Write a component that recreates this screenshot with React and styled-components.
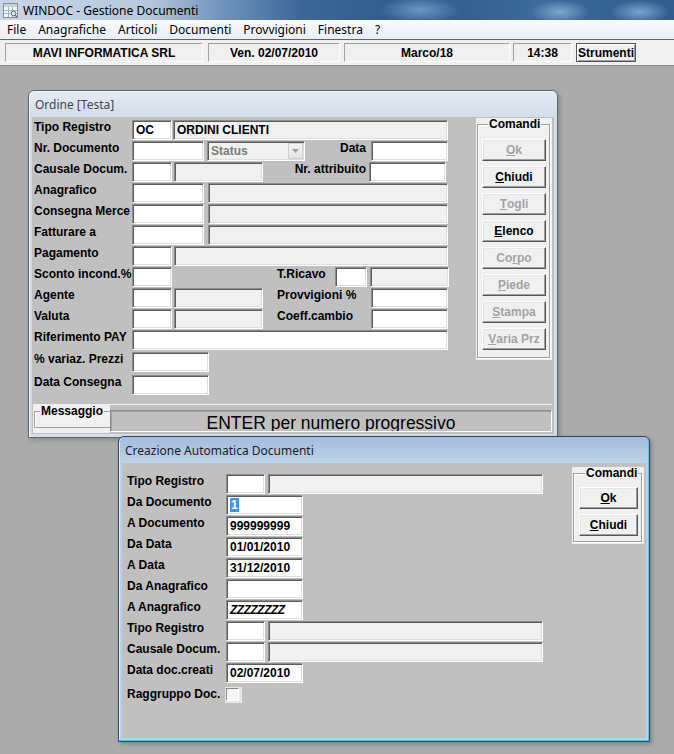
import React from 'react';
import styled, { createGlobalStyle } from 'styled-components';

const GlobalStyle = createGlobalStyle`
  html, body { margin: 0; padding: 0; background: #ababab; }
  body { overflow: hidden; }
`;

// ---- shell ----
const Screen = styled.div`
  width: 674px;
  height: 754px;
  display: flex;
  flex-direction: column;
  overflow: hidden;
  font-family: "Liberation Sans", Arial, sans-serif;
`;

const AppTitle = styled.div`
  height: 20px;
  display: flex;
  align-items: center;
  gap: 5px;
  padding-left: 3px;
  background:
    radial-gradient(ellipse 40px 14px at 420px 10px, rgba(160, 200, 240, 0.55), transparent),
    radial-gradient(ellipse 30px 12px at 560px 12px, rgba(170, 210, 245, 0.6), transparent),
    radial-gradient(ellipse 30px 12px at 640px 12px, rgba(170, 210, 245, 0.6), transparent),
    linear-gradient(90deg, #c9d6e6 0%, #b7c8dc 22%, #6f93bd 33%, #3b6697 45%, #2f5b8c 62%, #3c6a9c 80%, #2f5c8d 100%);
  font-family: "Noto Sans", "Liberation Sans", sans-serif;
  font-size: 12px;
  color: #000;
`;

const MenuBar = styled.div`
  height: 19px;
  display: flex;
  align-items: center;
  padding-left: 1px;
  background: linear-gradient(#f8fafd, #e9eef6);
  border-bottom: 1px solid #5e6670;
  font-family: "Noto Sans", "Liberation Sans", sans-serif;
  font-size: 12px;
`;

const MenuItem = styled.span`
  padding: 0 6px;
  color: #000;
`;

const StatusBar = styled.div`
  height: 26px;
  box-sizing: border-box;
  display: flex;
  align-items: center;
  padding-left: 5px;
  background: #f0f0f0;
  border-bottom: 1px solid #8a8a8a;
`;

const Panel = styled.div`
  width: ${p => p.$w}px;
  margin-left: ${p => p.$ml || 0}px;
  height: 19px;
  box-sizing: border-box;
  border: 1px solid;
  border-color: #a0a0a0 #fff #fff #a0a0a0;
  display: flex;
  align-items: center;
  justify-content: center;
  font-weight: bold;
  font-size: 12px;
`;

const ToolButton = styled.div`
  width: 60px;
  height: 19px;
  margin-left: 4px;
  box-sizing: border-box;
  border: 1px solid #555;
  box-shadow: inset 1px 1px 0 #fff, inset -1px -1px 0 #a0a0a0;
  display: flex;
  align-items: center;
  justify-content: center;
  font-weight: bold;
  font-size: 12px;
  background: #f0f0f0;
`;

const Desktop = styled.div`
  flex: 1;
  position: relative;
  background: #ababab;
`;

// ---- MDI child windows ----
const MdiWindow = styled.div`
  position: absolute;
  left: ${p => p.$x}px;
  top: ${p => p.$y}px;
  width: ${p => p.$w}px;
  height: ${p => p.$h}px;
  box-sizing: border-box;
  display: flex;
  flex-direction: column;
  padding: 0 3px 3px;
  border: 1px solid ${p => (p.$active ? '#34475e' : '#5f6770')};
  border-radius: 6px 6px 0 0;
  background: ${p =>
    p.$active
      ? 'linear-gradient(#a3bcdb 0, #bcd3eb 26px, #b9d1ea 26px)'
      : 'linear-gradient(#e5ecf5 0, #d2dde9 26px, #d4dfeb 26px)'};
  box-shadow: ${p =>
    p.$active
      ? 'inset -1px -1px 0 #62c1e6, inset 1px 0 0 #e6f0fa, 2px 2px 4px rgba(0,0,0,0.25)'
      : 'inset 1px 1px 0 #f2f6fa, 2px 2px 4px rgba(0,0,0,0.2)'};
`;

const WinTitle = styled.div`
  height: 26px;
  flex: none;
  display: flex;
  align-items: center;
  padding-left: 3px;
  font-family: "Noto Sans", "Liberation Sans", sans-serif;
  font-size: 12px;
  color: ${p => (p.$active ? '#1d1d1d' : '#474747')};
`;

const Client = styled.div`
  flex: 1;
  display: flex;
  flex-direction: column;
  background: #c0c0c0;
  padding: ${p => p.$pt}px 0 0 ${p => p.$pl}px;
  overflow: hidden;
`;

const TopArea = styled.div`
  display: flex;
  align-items: flex-start;
`;

const Form = styled.div`
  width: ${p => p.$w}px;
  margin-top: ${p => p.$mt}px;
  display: flex;
  flex-direction: column;
  gap: 1px;
`;

const Row = styled.div`
  display: flex;
  align-items: flex-start;
  height: ${p => p.$h || 20}px;
  margin-top: ${p => p.$mt || 0}px;
`;

const Label = styled.div`
  flex: none;
  width: ${p => p.$w || 98}px;
  margin-left: ${p => p.$ml || 0}px;
  box-sizing: border-box;
  padding-top: 1px;
  padding-right: ${p => (p.$right ? 3 : 0)}px;
  text-align: ${p => (p.$right ? 'right' : 'left')};
  font-weight: bold;
  font-size: 12px;
  line-height: 12px;
  white-space: nowrap;
  color: #000;
`;

const Field = styled.div`
  flex: none;
  width: ${p => p.$w}px;
  margin-left: ${p => p.$ml || 0}px;
  height: 20px;
  box-sizing: border-box;
  background: ${p => (p.$gray ? '#f0f0f0' : '#fff')};
  border: 1px solid;
  border-color: #8c8c8c #fff #fff #8c8c8c;
  box-shadow: inset 1px 1px 0 #5c5c5c, inset -1px -1px 0 #dedede;
  padding-left: 3px;
  font-weight: bold;
  font-size: 12px;
  line-height: 18px;
  white-space: nowrap;
  overflow: hidden;
  color: #000;
`;

const Combo = styled(Field)`
  display: flex;
  justify-content: space-between;
  align-items: center;
  padding-right: 1px;
  background: #f0f0f0;
  color: #7b7b7b;
`;

const ComboArrow = styled.span`
  width: 15px;
  height: 16px;
  box-sizing: border-box;
  display: flex;
  align-items: center;
  justify-content: center;
  background: linear-gradient(#f4f4f4, #e4e4e4);
  border: 1px solid #d0d0d0;
`;

const Selected = styled.span`
  background: #3399ff;
  color: #fff;
  padding: 0 1px;
`;

const Slanted = styled.span`
  font-style: italic;
  letter-spacing: -0.5px;
`;

const CheckWrap = styled.div`
  width: 17px;
  height: 16px;
  margin-left: -1px;
  background: #e6e6e6;
  padding: 1px;
  box-sizing: border-box;
`;

const CheckBox = styled.div`
  width: 13px;
  height: 13px;
  box-sizing: border-box;
  border: 1px solid;
  border-color: #8c8c8c #fff #fff #8c8c8c;
  background: #f4f4f4;
`;

// ---- group boxes & buttons ----
const GroupWrap = styled.div`
  flex: none;
  width: ${p => p.$w}px;
  margin-left: ${p => p.$ml}px;
  background: #f0f0f0;
`;

const Fieldset = styled.fieldset`
  margin: 0 2px 2px 1px;
  padding: ${p => p.$pt}px 0 ${p => p.$pb}px ${p => p.$pl}px;
  border: 1px solid #a0a0a0;
  box-shadow: inset 1px 1px 0 #fff, 1px 1px 0 #fff;
  min-width: 0;
`;

const Legend = styled.legend`
  margin-left: 6px;
  padding: 0 1px;
  background: #f0f0f0;
  font-weight: bold;
  font-size: 12px;
  line-height: 13px;
  color: #000;
`;

const CmdButton = styled.div`
  width: ${p => p.$w}px;
  height: 22px;
  box-sizing: border-box;
  display: flex;
  align-items: center;
  justify-content: center;
  background: #f0f0f0;
  border: 1px solid;
  border-color: #fff #555 #555 #fff;
  box-shadow: inset -1px -1px 0 #a0a0a0, inset 1px 1px 0 #e6e6e6;
  font-weight: bold;
  font-size: 12px;
  color: ${p => (p.$off ? '#a3a3a3' : '#000')};
  & + & { margin-top: 5px; }
  u { text-decoration: underline; }
`;

// ---- message bar ----
const MessageRow = styled.div`
  display: flex;
  height: 28px;
  margin: auto 2px 1px -1px;
  border-top: 1px solid #efefef;
`;

const MessageTag = styled.div`
  width: 77px;
  flex: none;
  background: #f0f0f0;
`;

const MessageFieldset = styled.fieldset`
  margin: 0 0 0 1px;
  padding: 0;
  height: 23px;
  box-sizing: border-box;
  border: 1px solid #a0a0a0;
  border-right: none;
  box-shadow: inset 1px 1px 0 #fff;
`;

const MessageLegend = styled(Legend)`
  margin-left: 5px;
`;

const MessageField = styled.div`
  flex: 1;
  margin-top: 5px;
  height: 22px;
  box-sizing: border-box;
  border: 1px solid;
  border-color: #8c8c8c #fff #fff #8c8c8c;
  box-shadow: inset 1px 1px 0 #a0a0a0;
  background: #c0c0c0;
  overflow: hidden;
  text-align: center;
  font-size: 17.5px;
  line-height: 24px;
  white-space: nowrap;
  color: #000;
`;

const AppIcon = () => (
  <svg width="15" height="15" viewBox="0 0 15 15">
    <rect x="0.5" y="0.5" width="14" height="14" fill="#f4f6f8" stroke="#8190a0" />
    <rect x="1" y="1" width="13" height="3" fill="#c9d3de" />
    <path d="M1 7.5h13M1 10.5h13M5.5 4v10M9.5 4v10" stroke="#a7b3c0" strokeWidth="1" />
    <circle cx="10.5" cy="10.5" r="2.3" fill="#dfe9f4" stroke="#5d6c7c" />
    <path d="M12.2 12.2l2 2" stroke="#5d6c7c" strokeWidth="1.4" />
  </svg>
);

const Arrow = () => (
  <svg width="7" height="4" viewBox="0 0 7 4">
    <path d="M0 0h7L3.5 4z" fill="#a0a0a0" />
  </svg>
);

const orderButtons = [
  { pre: '', key: 'O', post: 'k', off: true },
  { pre: '', key: 'C', post: 'hiudi' },
  { pre: '', key: 'T', post: 'ogli', off: true },
  { pre: '', key: 'E', post: 'lenco' },
  { pre: 'Co', key: 'r', post: 'po', off: true },
  { pre: '', key: 'P', post: 'iede', off: true },
  { pre: '', key: 'S', post: 'tampa', off: true },
  { pre: '', key: 'V', post: 'aria Prz', off: true },
];

const Btn = ({ b, w }) => (
  <CmdButton $w={w} $off={b.off}>
    {b.pre}<u>{b.key}</u>{b.post}
  </CmdButton>
);

const App = () => {
  return (
    <Screen>
      <GlobalStyle />
      <AppTitle>
        <AppIcon />
        <span>WINDOC - Gestione Documenti</span>
      </AppTitle>
      <MenuBar>
        {['File', 'Anagrafiche', 'Articoli', 'Documenti', 'Provvigioni', 'Finestra', '?'].map(m => (
          <MenuItem key={m}>{m}</MenuItem>
        ))}
      </MenuBar>
      <StatusBar>
        <Panel $w={198}>MAVI INFORMATICA SRL</Panel>
        <Panel $w={132} $ml={5}>Ven. 02/07/2010</Panel>
        <Panel $w={166} $ml={4}>Marco/18</Panel>
        <Panel $w={59} $ml={3}>14:38</Panel>
        <ToolButton>Strumenti</ToolButton>
      </StatusBar>

      <Desktop>
        {/* Ordine [Testa] */}
        <MdiWindow $x={28} $y={24} $w={530} $h={348}>
          <WinTitle>Ordine [Testa]</WinTitle>
          <Client $pt={1} $pl={2}>
            <TopArea>
              <Form $w={414} $mt={2}>
                <Row>
                  <Label>Tipo Registro</Label>
                  <Field $w={40}>OC</Field>
                  <Field $w={275} $ml={1} $gray>ORDINI CLIENTI</Field>
                </Row>
                <Row>
                  <Label>Nr. Documento</Label>
                  <Field $w={72} />
                  <Combo $w={98} $ml={3}>
                    <span>Status</span>
                    <ComboArrow><Arrow /></ComboArrow>
                  </Combo>
                  <Label $w={64} $right>Data</Label>
                  <Field $w={77} $ml={2} />
                </Row>
                <Row>
                  <Label>Causale Docum.</Label>
                  <Field $w={40} />
                  <Field $w={89} $ml={2} $gray />
                  <Label $w={106} $right>Nr. attribuito</Label>
                  <Field $w={77} />
                </Row>
                <Row>
                  <Label>Anagrafico</Label>
                  <Field $w={72} />
                  <Field $w={240} $ml={4} $gray />
                </Row>
                <Row>
                  <Label>Consegna Merce</Label>
                  <Field $w={72} />
                  <Field $w={240} $ml={4} $gray />
                </Row>
                <Row>
                  <Label>Fatturare a</Label>
                  <Field $w={72} />
                  <Field $w={240} $ml={4} $gray />
                </Row>
                <Row>
                  <Label>Pagamento</Label>
                  <Field $w={40} />
                  <Field $w={274} $ml={2} $gray />
                </Row>
                <Row>
                  <Label>Sconto incond.%</Label>
                  <Field $w={40} />
                  <Label $w={58} $ml={105}>T.Ricavo</Label>
                  <Field $w={32} />
                  <Field $w={79} $ml={3} $gray />
                </Row>
                <Row>
                  <Label>Agente</Label>
                  <Field $w={40} />
                  <Field $w={89} $ml={2} $gray />
                  <Label $w={94} $ml={14}>Provvigioni %</Label>
                  <Field $w={77} />
                </Row>
                <Row>
                  <Label>Valuta</Label>
                  <Field $w={40} />
                  <Field $w={89} $ml={2} $gray />
                  <Label $w={94} $ml={14}>Coeff.cambio</Label>
                  <Field $w={77} />
                </Row>
                <Row>
                  <Label>Riferimento PAY</Label>
                  <Field $w={316} />
                </Row>
                <Row $mt={1}>
                  <Label>% variaz. Prezzi</Label>
                  <Field $w={77} />
                </Row>
                <Row $mt={2}>
                  <Label>Data Consegna</Label>
                  <Field $w={77} />
                </Row>
              </Form>

              <GroupWrap $w={76} $ml={28}>
                <Fieldset $pt={8} $pb={7} $pl={4}>
                  <Legend>Comandi</Legend>
                  {orderButtons.map(b => (
                    <Btn key={b.key + b.post} b={b} w={64} />
                  ))}
                </Fieldset>
              </GroupWrap>
            </TopArea>

            <MessageRow>
              <MessageTag>
                <MessageFieldset>
                  <MessageLegend>Messaggio</MessageLegend>
                </MessageFieldset>
              </MessageTag>
              <MessageField>ENTER per numero progressivo</MessageField>
            </MessageRow>
          </Client>
        </MdiWindow>

        {/* Creazione Automatica Documenti */}
        <MdiWindow $x={118} $y={370} $w={532} $h={306} $active>
          <WinTitle $active>Creazione Automatica Documenti</WinTitle>
          <Client $pt={4} $pl={5}>
            <TopArea>
              <Form $w={416} $mt={7}>
                <Row>
                  <Label $w={99}>Tipo Registro</Label>
                  <Field $w={39} />
                  <Field $w={275} $ml={3} $gray />
                </Row>
                <Row>
                  <Label $w={99}>Da Documento</Label>
                  <Field $w={77}><Selected>1</Selected></Field>
                </Row>
                <Row>
                  <Label $w={99}>A Documento</Label>
                  <Field $w={77}>999999999</Field>
                </Row>
                <Row>
                  <Label $w={99}>Da Data</Label>
                  <Field $w={77}>01/01/2010</Field>
                </Row>
                <Row>
                  <Label $w={99}>A Data</Label>
                  <Field $w={77}>31/12/2010</Field>
                </Row>
                <Row>
                  <Label $w={99}>Da Anagrafico</Label>
                  <Field $w={77} />
                </Row>
                <Row>
                  <Label $w={99}>A Anagrafico</Label>
                  <Field $w={77}><Slanted>ZZZZZZZZ</Slanted></Field>
                </Row>
                <Row>
                  <Label $w={99}>Tipo Registro</Label>
                  <Field $w={39} />
                  <Field $w={275} $ml={3} $gray />
                </Row>
                <Row>
                  <Label $w={99}>Causale Docum.</Label>
                  <Field $w={39} />
                  <Field $w={275} $ml={3} $gray />
                </Row>
                <Row>
                  <Label $w={99}>Data doc.creati</Label>
                  <Field $w={77}>02/07/2010</Field>
                </Row>
                <Row $mt={3} $h={16}>
                  <Label $w={99}>Raggruppo Doc.</Label>
                  <CheckWrap><CheckBox /></CheckWrap>
                </Row>
              </Form>

              <GroupWrap $w={72} $ml={29}>
                <Fieldset $pt={7} $pb={5} $pl={5}>
                  <Legend>Comandi</Legend>
                  <Btn b={{ pre: '', key: 'O', post: 'k' }} w={59} />
                  <Btn b={{ pre: '', key: 'C', post: 'hiudi' }} w={59} />
                </Fieldset>
              </GroupWrap>
            </TopArea>
          </Client>
        </MdiWindow>
      </Desktop>
    </Screen>
  );
};

export default App;
